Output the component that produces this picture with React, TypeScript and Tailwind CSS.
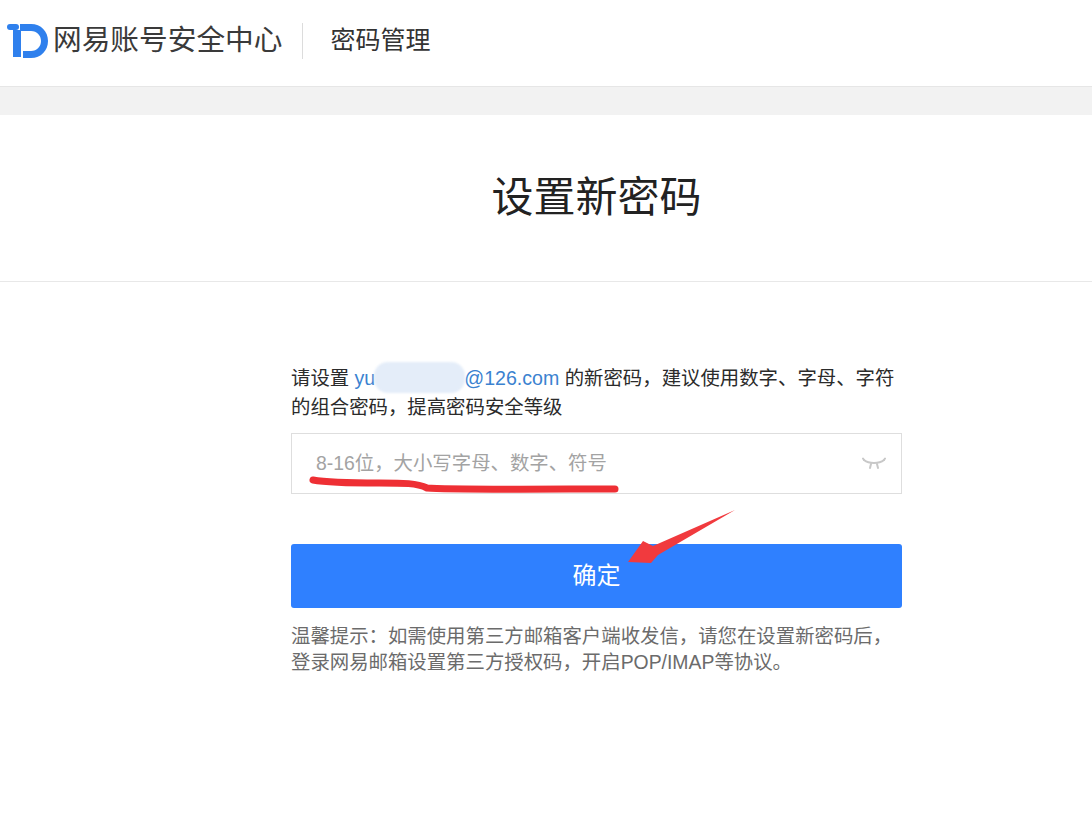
export default function App() {
  return (
    <div className="relative h-[833px] w-[1092px] overflow-hidden bg-white text-[#333] font-['Liberation_Sans','Noto_Sans_CJK_SC',sans-serif]">
      <header className="flex h-[87px] items-center border-b border-[#e6e6e6] pb-[5px]">
        <svg className="ml-[7px] h-[34px] w-[41px] shrink-0" viewBox="0 0 41 34" fill="none">
          <path d="M3 3H9" stroke="#2f80ed" strokeWidth="6" strokeLinecap="round" />
          <path d="M10 6V33" stroke="#2f80ed" strokeWidth="8" />
          <path d="M13 0H24C34 0 41 7.500 41 17C41 26.500 34 34 24 34H16V27H24C30 27 34 22.500 34 17C34 11.500 30 7 24 7H13Z" fill="#2f80ed" />
        </svg>
        <div className="ml-[5px] whitespace-nowrap text-[28.7px] leading-none text-[#3a3a3a]">网易账号安全中心</div>
        <div className="ml-[19px] h-[36px] w-px bg-[#dcdcdc]" />
        <div className="ml-[28px] whitespace-nowrap text-[25px] leading-none text-[#333]">密码管理</div>
      </header>
      <div className="h-[28px] bg-[#f2f2f2]" />
      <div className="flex h-[167px] items-center justify-center border-b border-[#e8e8e8] pl-[101px]">
        <h1 className="text-[42px] leading-none font-normal text-[#222]">设置新密码</h1>
      </div>
      <main className="ml-[291px] w-[611px] pt-[82px]">
        <div className="relative text-[19.4px] leading-[29px] text-[#2b2b2b]">
          <p>
            请设置 <span className="text-[19.6px] text-[#3b82d0]">yu<span className="inline-block w-[89px]" />@126.com</span> 的新密码，建议使用数字、字母、字符的组合密码，提高密码安全等级
          </p>
          <div className="absolute left-[83px] top-[-2px] h-[31px] w-[91px] rounded-[14px] bg-[#e4edf9] blur-[1px]" />
        </div>
        <div className="relative mt-[11px] flex h-[61px] items-center justify-between border border-[#dedede] bg-white pl-[24px] pr-[15px]">
          <span className="text-[19.4px] text-[#a3a3a3]">8-16位，大小写字母、数字、符号</span>
          <svg className="h-[14px] w-[24px]" viewBox="0 0 24 14" fill="none" stroke="#c8c8c8" strokeWidth="2" strokeLinecap="round">
            <path d="M2 3C7 7 17 7 22 3" />
            <path d="M9 7L8 11M15 7L16 11M2 3L1 1.500M22 3L23 1.500" />
          </svg>
          <svg className="absolute left-[17px] top-[41px] h-[22px] w-[310px]" viewBox="0 0 310 22" fill="none">
            <path d="M4 5C20 8 50 8 70 8C95 8 108 8 118 13C140 15 250 14 306 14" stroke="#ee2f34" strokeWidth="7" strokeLinecap="round" strokeLinejoin="round" />
          </svg>
        </div>
        <div className="relative mt-[50px]">
          <button className="h-[64px] w-full rounded-[3px] bg-[#2f80ff] text-[24px] text-white">确定</button>
          <svg className="absolute left-[335px] top-[-36px] h-[56px] w-[110px]" viewBox="0 0 110 56" fill="#f13a3e">
            <path d="M109 2L27 38L17 33L2 54L25 55L32 47Z" />
          </svg>
        </div>
        <p className="mt-[15px] text-[19.4px] leading-[26px] text-[#6b6b6b]">
          温馨提示：如需使用第三方邮箱客户端收发信，请您在设置新密码后，登录网易邮箱设置第三方授权码，开启POP/IMAP等协议。
        </p>
      </main>
    </div>
  );
}
